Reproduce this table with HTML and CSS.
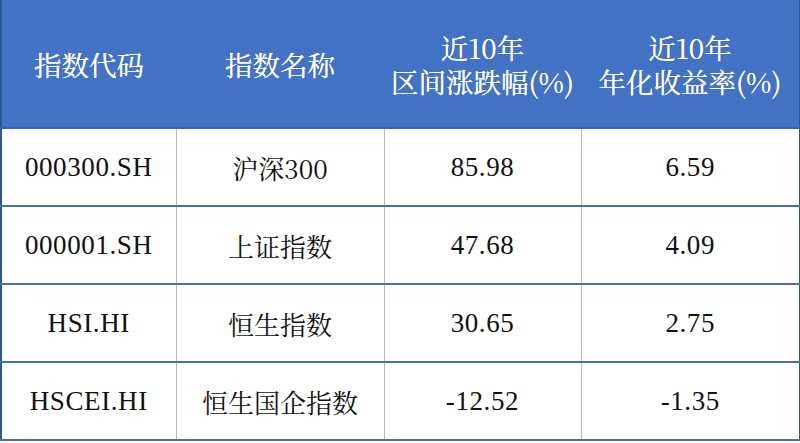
FILE: index.html
```html
<!DOCTYPE html>
<html lang="zh">
<head>
<meta charset="utf-8">
<link rel="stylesheet" href="styles.css">
</head>
<body>
<table class="tbl">
  <colgroup>
    <col class="c1"><col class="c2"><col class="c3"><col class="c4">
  </colgroup>
  <thead>
    <tr>
      <th>指数代码</th>
      <th>指数名称</th>
      <th><span class="ln">近10年</span><span class="ln">区间涨跌幅(%)</span></th>
      <th><span class="ln">近10年</span><span class="ln">年化收益率(%)</span></th>
    </tr>
  </thead>
  <tbody>
    <tr><td class="num">000300.SH</td><td>沪深300</td><td class="num">85.98</td><td class="num">6.59</td></tr>
    <tr><td class="num">000001.SH</td><td>上证指数</td><td class="num">47.68</td><td class="num">4.09</td></tr>
    <tr><td class="num">HSI.HI</td><td>恒生指数</td><td class="num">30.65</td><td class="num">2.75</td></tr>
    <tr><td class="num">HSCEI.HI</td><td>恒生国企指数</td><td class="num">-12.52</td><td class="num">-1.35</td></tr>
  </tbody>
</table>
</body>
</html>
```
FILE: styles.css
```css
html, body {
  margin: 0;
  padding: 0;
  background: #ffffff;
}
.tbl {
  width: 799px;
  border-collapse: collapse;
  table-layout: fixed;
  font-family: "Noto Serif CJK SC", "Liberation Serif", "Noto Sans CJK SC", serif;
  font-size: 26px;
  color: #111111;
  border-left: 2px solid #2f5597;
  border-right: 2px solid #2f5597;
  border-bottom: 2px solid #2f5597;
}
.c1 { width: 175px; }
.c2 { width: 208px; }
.c3 { width: 197px; }
.c4 { width: 219px; }
.tbl th {
  background: #4472c4;
  color: #ffffff;
  font-weight: normal;
  font-size: 27.5px;
  height: 127px;
  padding: 0;
  line-height: 34px;
  text-align: center;
  vertical-align: middle;
  border-bottom: 2px solid #3a64b0;
  text-shadow: 0 0 0.6px #ffffff;
}
.ln {
  display: block;
  height: 34px;
  line-height: 34px;
}
.tbl td {
  height: 76px;
  padding: 0;
  text-align: center;
  vertical-align: middle;
  border-left: 1px solid #b8b8b8;
  border-bottom: 2px solid #4a6fae;
}
.tbl td.num {
  font-family: "Liberation Serif", "Noto Serif CJK SC", serif;
  font-size: 27px;
  letter-spacing: 0.6px;
}
.tbl td:first-child {
  border-left: 2px solid #2f5597;
}
```
